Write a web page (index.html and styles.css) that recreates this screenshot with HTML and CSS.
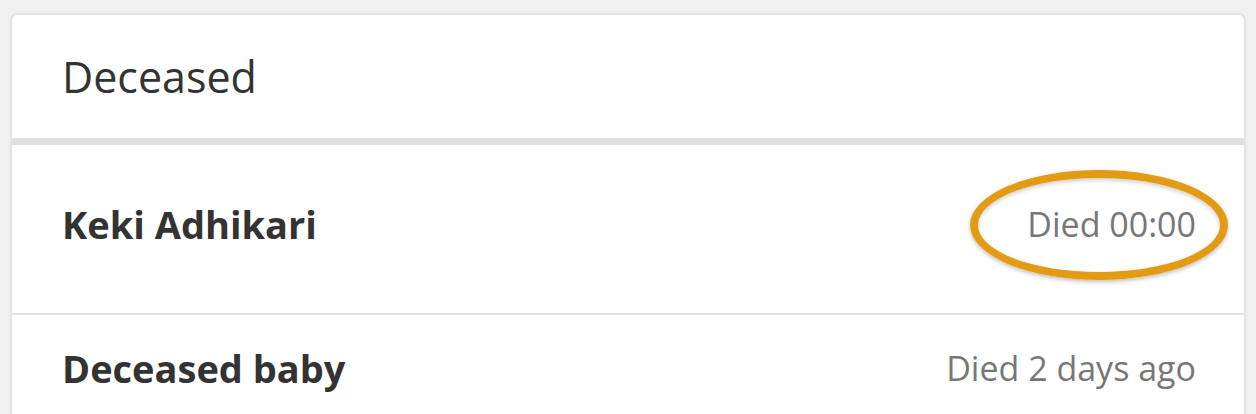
FILE: index.html
```html
<!DOCTYPE html>
<html lang="en">
<head>
    <meta charset="UTF-8">
    <title>Deceased</title>
    <link rel="stylesheet" href="styles.css">
</head>
<body>
    <div class="card">
        <div class="card-header">Deceased</div>
        <ul class="list">
            <li class="row">
                <span class="name">Keki Adhikari</span>
                <span class="when highlighted">Died 00:00</span>
            </li>
            <li class="row">
                <span class="name">Deceased baby</span>
                <span class="when">Died 2 days ago</span>
            </li>
        </ul>
    </div>
</body>
</html>
```

FILE: styles.css
```css
body {
    margin: 0;
    background-color: #f0f0f0;
    font-family: 'Open Sans', sans-serif;
    padding: 13px 10px 0 10px;
    height: 414px;
    box-sizing: border-box;
    overflow: hidden;
}

.card {
    background-color: #fff;
    border: 2px solid #e2e2e2;
    border-radius: 7px;
    overflow: hidden;
}

.card-header {
    height: 123px;
    padding-left: 50px;
    display: flex;
    align-items: center;
    font-size: 43px;
    color: #333;
    border-bottom: 7px solid #e0e0e0;
}

.list {
    list-style: none;
    margin: 0;
    padding: 0;
}

.row {
    display: flex;
    justify-content: space-between;
    align-items: flex-start;
    box-sizing: border-box;
    height: 170px;
    padding: 27px 48px 0 50px;
    line-height: 52px;
    border-bottom: 2px solid #e2e2e2;
}

.row:first-child {
    padding-top: 53px;
}

.name {
    font-size: 38px;
    font-weight: bold;
    color: #333;
}

.when {
    font-size: 34px;
    color: #777;
    position: relative;
}

.highlighted::after {
    content: "";
    position: absolute;
    left: -57px;
    right: -32px;
    top: -28px;
    bottom: -30px;
    border: 8px solid #e39b14;
    border-radius: 50%;
    box-shadow: 0 2px 4px rgba(0, 0, 0, 0.25), inset 0 2px 4px rgba(0, 0, 0, 0.2);
}
```
